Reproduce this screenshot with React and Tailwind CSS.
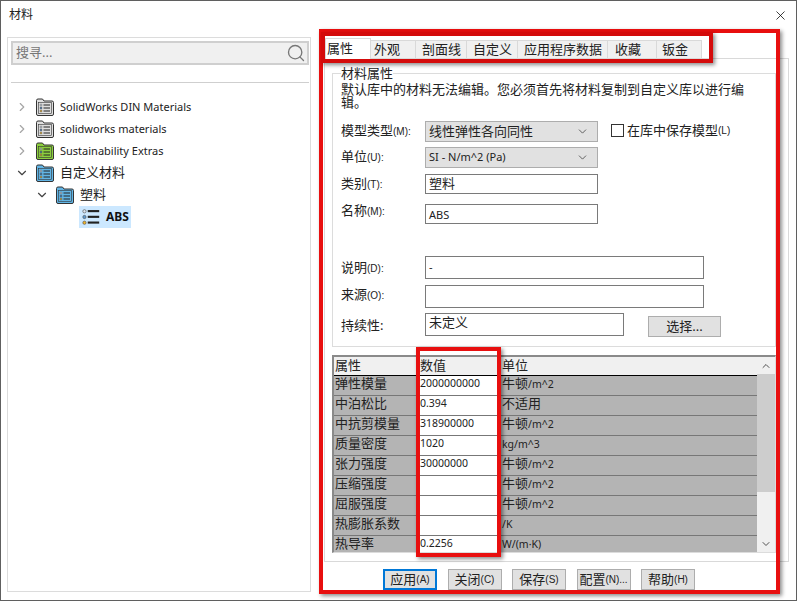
import React from 'react';
import { ChevronRight, ChevronDown, ChevronUp, Search, X } from 'lucide-react';

const font = { cjk: "font-['Noto_Sans','Noto_Sans_CJK_SC',sans-serif]" };

const tabs = [
  { name: '外观', w: 'w-[45px] pl-[3px]' },
  { name: '剖面线', w: 'w-[51px] pl-[6px]' },
  { name: '自定义', w: 'w-[51px] pl-[6px]' },
  { name: '应用程序数据', w: 'w-[90px] pl-[6px]' },
  { name: '收藏', w: 'w-[49px] pl-[7px]' },
  { name: '钣金', w: 'w-[45px] pl-[5px]' },
];

const rows = [
  { name: '弹性模量', value: '2000000000', cn: '牛顿', unit: '/m^2' },
  { name: '中泊松比', value: '0.394', cn: '不适用', unit: '' },
  { name: '中抗剪模量', value: '318900000', cn: '牛顿', unit: '/m^2' },
  { name: '质量密度', value: '1020', cn: '', unit: 'kg/m^3' },
  { name: '张力强度', value: '30000000', cn: '牛顿', unit: '/m^2' },
  { name: '压缩强度', value: '', cn: '牛顿', unit: '/m^2' },
  { name: '屈服强度', value: '', cn: '牛顿', unit: '/m^2' },
  { name: '热膨胀系数', value: '', cn: '', unit: '/K' },
  { name: '热导率', value: '0.2256', cn: '', unit: 'W/(m·K)' },
];

const ListIcon = ({ size = 22 }) => (
  <svg width={size} height={size} viewBox="0 0 22 22">
    <circle cx="3" cy="4" r="2" fill="#dce6f2" stroke="#555" strokeWidth="0.8" />
    <circle cx="3" cy="11" r="2" fill="#5b9bd5" stroke="#555" strokeWidth="0.8" />
    <circle cx="3" cy="18" r="2" fill="#f0b429" stroke="#555" strokeWidth="0.8" />
    <rect x="7" y="2.5" width="14" height="2.6" fill="#222" />
    <rect x="7" y="9.5" width="14" height="2.6" fill="#222" />
    <rect x="7" y="16.5" width="14" height="2.6" fill="#222" />
  </svg>
);

const FolderIcon = ({ fill }) => (
  <svg width="18" height="18" viewBox="0 0 18 18">
    <path d="M0.5 16V2.5Q0.5 1 2 1H6.5L8 3H16Q17.5 3 17.5 4.5V16Q17.5 17.5 16 17.5H2Q0.5 17.5 0.5 16Z" fill={fill} stroke="#333" />
    <rect x="2.5" y="4.5" width="13" height="11" fill={fill} stroke="#333" strokeWidth="0.6" />
    <circle cx="5" cy="7" r="1" fill="#dce6f2" stroke="#444" strokeWidth="0.5" />
    <circle cx="5" cy="10" r="1" fill="#3d7ab8" stroke="#444" strokeWidth="0.5" />
    <circle cx="5" cy="13" r="1" fill="#f0b429" stroke="#444" strokeWidth="0.5" />
    <path d="M7.5 7H14M7.5 10H14M7.5 13H14" stroke="#222" strokeWidth="1.2" />
  </svg>
);

const TreeRow = ({ indent, open, fill, children }) => (
  <div className="flex items-center h-[22px]" style={{ paddingLeft: indent }}>
    <span className="w-[18px] flex justify-center mr-[5px]">
      {open ? (
        <ChevronDown size={14} strokeWidth={2} className="text-[#444]" />
      ) : (
        <ChevronRight size={14} strokeWidth={2} className="text-[#a6a6a6]" />
      )}
    </span>
    <FolderIcon fill={fill} />
    <span className="ml-[6px] text-[11px] text-[#222] whitespace-nowrap">{children}</span>
  </div>
);

const FieldLabel = ({ text, hot, className = '' }) => (
  <span className={`w-[84px] shrink-0 text-[13px] leading-[16px] text-[#222] whitespace-nowrap ${className}`}>
    {text}
    {hot && <span className="text-[10px] font-['Liberation_Sans',sans-serif]">{hot}</span>}
  </span>
);

const Select = ({ children, small }) => (
  <div className={`w-[173px] h-[21px] bg-[#e1e1e1] border border-[#adadad] flex items-center justify-between pl-[3px] pr-[8px] text-[#222] ${small ? 'text-[11px]' : 'text-[13px]'}`}>
    <span className="whitespace-nowrap">{children}</span>
    <ChevronDown size={13} strokeWidth={1.5} className="text-[#444]" />
  </div>
);

const Input = ({ w, h, children, small }) => (
  <div className={`${w} ${h} bg-white border border-[#7a7a7a] pl-[3px] leading-[16px] text-[#222] ${small ? 'text-[11px] pt-[2px]' : 'text-[13px]'}`}>
    {children}
  </div>
);

const FooterButton = ({ text, hot, active }) => (
  <button className={`w-[54px] h-[21px] flex items-center justify-center text-[13px] text-[#222] whitespace-nowrap bg-[#e1e1e1] ${active ? 'border-2 border-[#0078d7]' : 'border border-[#adadad]'}`}>
    {text}
    <span className="text-[10px] font-['Liberation_Sans',sans-serif]">{hot}</span>
  </button>
);

export default function App() {
  return (
    <div className={`relative w-[797px] h-[601px] overflow-hidden bg-white border border-[#5f5f5f] ${font.cjk}`}>
      {/* title bar */}
      <div className="h-[36px] flex items-start justify-between pl-[8px] pr-[8px] pt-[6px]">
        <span className="text-[12px] leading-[16px] text-[#222]">材料</span>
        <X size={15} strokeWidth={1.2} className="mt-[1px] text-black" />
      </div>

      <div className="flex pl-[6px]">
        {/* library tree */}
        <div className="w-[304px] h-[555px] border border-[#dcdcdc] pt-[3px] pl-[3px] pr-[1px]">
          <div className="h-[24px] bg-[#f0f0f0] border-2 border-[#cfcfcf] flex items-center justify-between pl-[3px] pr-[1px]">
            <span className="text-[13px] text-[#777]">搜寻...</span>
            <Search size={20} strokeWidth={1.6} className="text-[#777]" />
          </div>
          <div className="mt-[17px] border-t border-[#cfcfcf]" />
          <div className="mt-[13px]">
            <TreeRow indent={2} fill="#dedede">SolidWorks DIN Materials</TreeRow>
            <TreeRow indent={2} fill="#dedede">solidworks materials</TreeRow>
            <TreeRow indent={2} fill="#8ccf3f">Sustainability Extras</TreeRow>
            <TreeRow indent={2} open fill="#62b5e5">
              <span className="text-[13px]">自定义材料</span>
            </TreeRow>
            <TreeRow indent={22} open fill="#62b5e5">
              <span className="text-[13px]">塑料</span>
            </TreeRow>
            <div className="flex items-center h-[22px] ml-[68px] w-[52px] pl-[3px] bg-[#cce8ff]">
              <ListIcon size={18} />
              <span className="ml-[6px] text-[12px] font-bold text-[#111]">ABS</span>
            </div>
          </div>
        </div>

        {/* material properties */}
        <div className="ml-[13px] w-[465px]">
          <div className="h-[21px] flex items-end pl-[1px] relative z-10">
            <div className="w-[46px] h-[21px] -mb-px bg-white border border-b-0 border-[#d9d9d9] pl-[1px] text-[13px] leading-[18px] text-[#222]">属性</div>
            {tabs.map((tab) => (
              <div key={tab.name} className={`${tab.w} h-[18px] bg-[#f0f0f0] border-r border-t border-[#d9d9d9] text-[13px] leading-[17px] text-[#222] whitespace-nowrap`}>
                {tab.name}
              </div>
            ))}
          </div>

          <div className="h-[504px] border border-[#d9d9d9] pl-[7px] pr-[12px] pt-[14px]">
            <div className="h-[274px] border border-[#dcdcdc] pl-[8px] pr-[8px]">
              <div className="-mt-[8px] w-fit bg-white text-[13px] leading-[14px] text-[#222]">材料属性</div>
              <p className="text-[13px] leading-[13px] mt-[3px] text-[#222]">默认库中的材料无法编辑。您必须首先将材料复制到自定义库以进行编辑。</p>

              <div className="mt-[12px] flex items-start h-[21px]">
                <FieldLabel text="模型类型" hot="(M):" className="mt-[1px]" />
                <Select>线性弹性各向同性</Select>
                <div className="ml-[13px] flex items-center text-[13px] text-[#222] whitespace-nowrap">
                  <span className="w-[13px] h-[13px] border border-[#333] bg-white mr-[3px]" />
                  在库中保存模型
                  <span className="text-[10px] font-['Liberation_Sans',sans-serif]">(L)</span>
                </div>
              </div>
              <div className="mt-[5px] flex items-start h-[21px]">
                <FieldLabel text="单位" hot="(U):" className="mt-[1px]" />
                <Select small>SI - N/m^2 (Pa)</Select>
              </div>
              <div className="mt-[6px] flex items-center h-[20px]">
                <FieldLabel text="类别" hot="(T):" />
                <Input w="w-[173px]" h="h-[20px]">塑料</Input>
              </div>
              <div className="mt-[10px] flex items-start h-[20px]">
                <FieldLabel text="名称" hot="(M):" className="-mt-[2px]" />
                <Input w="w-[173px]" h="h-[20px]" small>ABS</Input>
              </div>
              <div className="mt-[32px] flex items-center h-[23px]">
                <FieldLabel text="说明" hot="(D):" />
                <Input w="w-[279px]" h="h-[23px]" small>-</Input>
              </div>
              <div className="mt-[6px] flex items-center h-[23px]">
                <FieldLabel text="来源" hot="(O):" className="-mt-[4px]" />
                <Input w="w-[279px]" h="h-[23px]" />
              </div>
              <div className="mt-[5px] flex items-center h-[23px]">
                <FieldLabel text="持续性:" />
                <Input w="w-[199px]" h="h-[23px]">未定义</Input>
                <button className="ml-[24px] mt-[4px] w-[73px] h-[21px] bg-[#e1e1e1] border border-[#adadad] text-[13px] text-[#222]">选择...</button>
              </div>
            </div>

            {/* properties table */}
            <div className="mt-[8px] w-[444px] h-[198px] overflow-hidden flex border-t-2 border-l-2 border-[#8a8a8a] border-r border-b border-r-[#dcdcdc] border-b-[#dcdcdc]">
              <div className="w-[423px]">
                <div className="h-[19px] flex bg-[#f0f0f0] border-b border-black text-[13px] leading-[16px] text-[#222]">
                  <span className="w-[84px] pl-[1px]">属性</span>
                  <span className="w-[80px] pl-[2px]">数值</span>
                  <span className="pl-[4px]">单位</span>
                </div>
                {rows.map((row, i) => (
                  <div key={row.name} className={`h-[20px] flex bg-[#b4b4b4] text-[#222] leading-[15px] ${i < rows.length - 1 ? 'border-b border-[#777]' : ''}`}>
                    <span className="w-[84px] pl-[1px] text-[13px] whitespace-nowrap">{row.name}</span>
                    <span className="w-[80px] pl-[2px] bg-white text-[10.5px]">{row.value}</span>
                    <span className="pl-[4px] text-[13px] whitespace-nowrap">
                      {row.cn}
                      <span className="text-[10.5px]">{row.unit}</span>
                    </span>
                  </div>
                ))}
              </div>
              <div className="flex-1 bg-[#f0f0f0] flex flex-col items-center">
                <div className="h-[17px] flex items-center">
                  <ChevronUp size={12} strokeWidth={2} className="text-[#505050]" />
                </div>
                <div className="w-full h-[118px] bg-[#cdcdcd]" />
                <div className="mt-auto h-[17px] flex items-center">
                  <ChevronDown size={12} strokeWidth={2} className="text-[#505050]" />
                </div>
              </div>
            </div>
          </div>

          <div className="mt-[7px] ml-[59px] flex gap-[10.5px]">
            <FooterButton text="应用" hot="(A)" active />
            <FooterButton text="关闭" hot="(C)" />
            <FooterButton text="保存" hot="(S)" />
            <FooterButton text="配置" hot="(N)..." />
            <FooterButton text="帮助" hot="(H)" />
          </div>
        </div>
      </div>

      {/* red annotation frames drawn over the dialog */}
      <div className="absolute left-[318px] top-[28px] w-[461px] h-[565px] border-[4px] border-[#e80f0f] shadow-[2px_2px_4px_rgba(0,0,0,0.45)] pointer-events-none" />
      <div className="absolute left-[320px] top-[31px] w-[392px] h-[31px] border-[4px] border-[#d40b0b] shadow-[2px_2px_4px_rgba(0,0,0,0.45)] pointer-events-none" />
      <div className="absolute left-[415px] top-[346px] w-[85px] h-[210px] border-[4px] border-[#e80f0f] shadow-[2px_2px_4px_rgba(0,0,0,0.45)] pointer-events-none" />
    </div>
  );
}
